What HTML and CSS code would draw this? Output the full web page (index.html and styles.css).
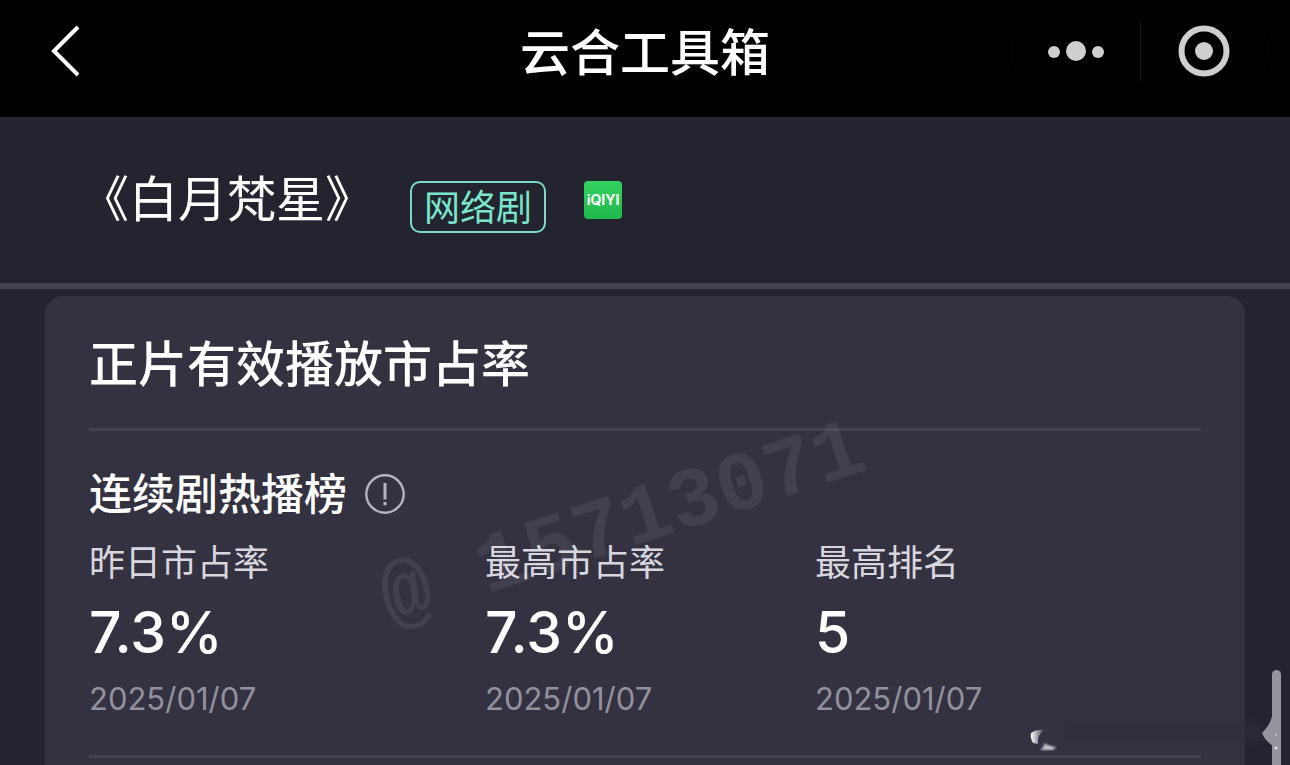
FILE: index.html
```
<!DOCTYPE html>
<html lang="zh-CN">
<head>
  <meta charset="UTF-8">
  <meta name="viewport" content="width=device-width, initial-scale=1.0">
  <title>云合工具箱</title>
  <link rel="stylesheet" href="styles.css">
</head>
<body>
  <header class="navbar">
    <button class="back-btn" aria-label="返回">
      <svg width="32" height="54" viewBox="0 0 32 54"><path d="M28 3 4 27l24 24" fill="none" stroke="#fff" stroke-width="4"/></svg>
    </button>
    <h1>云合工具箱</h1>
    <div class="capsule">
      <button class="more-btn" aria-label="更多">
        <svg width="58" height="22" viewBox="0 0 58 22" fill="#cfcfcf"><circle cx="7" cy="12" r="6"/><circle cx="29" cy="11" r="10"/><circle cx="51" cy="12" r="6"/></svg>
      </button>
      <button class="close-btn" aria-label="关闭">
        <svg width="52" height="52" viewBox="0 0 52 52"><circle cx="26" cy="26" r="22.5" fill="none" stroke="#cfcfcf" stroke-width="6"/><circle cx="26" cy="26" r="9" fill="#cfcfcf"/></svg>
      </button>
    </div>
  </header>

  <section class="drama">
    <h2>《白月梵星》</h2>
    <span class="tag">网络剧</span>
    <span class="platform">iQIYI</span>
  </section>

  <main class="card">
    <h2 class="card-title">正片有效播放市占率</h2>
    <div class="rank-head">
      <h3>连续剧热播榜</h3>
      <button class="info-btn" aria-label="说明">
        <svg width="40" height="40" viewBox="0 0 40 40"><circle cx="20" cy="20" r="18.7" fill="none" stroke="#b5b3c2" stroke-width="2.4"/><path d="M20 9v16.5M20 28v3.2" stroke="#b5b3c2" stroke-width="3"/></svg>
      </button>
    </div>
    <div class="stats">
      <div class="stat">
        <div class="label">昨日市占率</div>
        <div class="value">7.3%</div>
        <div class="date">2025/01/07</div>
      </div>
      <div class="stat">
        <div class="label">最高市占率</div>
        <div class="value">7.3%</div>
        <div class="date">2025/01/07</div>
      </div>
      <div class="stat">
        <div class="label">最高排名</div>
        <div class="value">5</div>
        <div class="date">2025/01/07</div>
      </div>
    </div>
    <div class="watermark" aria-hidden="true">@ 15713071</div>
  </main>

  <div class="scroll-thumb"></div>
  <svg class="smudge" width="260" height="54" viewBox="0 0 260 54" aria-hidden="true">
    <defs>
      <linearGradient id="fade" x1="0" x2="1" y1="0" y2="0">
        <stop offset="0" stop-color="#fff"/>
        <stop offset="1" stop-color="#fff" stop-opacity="0"/>
      </linearGradient>
      <filter id="soft"><feGaussianBlur stdDeviation="3"/></filter>
      <filter id="edge"><feGaussianBlur stdDeviation="1"/></filter>
    </defs>
    <path d="M30 10h200l4 22H34z" fill="#302d3b" opacity=".5" filter="url(#soft)"/>
    <path d="M1 22q6-4 14-3-8 4-7 14l-5-1q-3-5-2-10z" fill="url(#fade)"/>
    <path d="M10 39h13l3-3q-8-1-12-4 1 4-4 7z" fill="#c9c8ce" filter="url(#edge)"/>
    <path d="M243 0q-1 12-11 22 3 8 11 13l7-8V8z" fill="#96959e"/>
    <circle cx="246" cy="24" r="1" fill="#c5c4ca"/>
    <circle cx="246" cy="37" r="1.5" fill="#dddce0"/>
  </svg>
</body>
</html>
```
FILE: styles.css
```
* {
  box-sizing: border-box;
}

body {
  display: flex;
  flex-direction: column;
  margin: 0;
  min-height: 100vh;
  background-color: #242330;
  color: #fff;
  font-family: Inter, "Noto Sans CJK SC", sans-serif;
}

h1, h2, h3 {
  margin: 0;
  font-weight: 500;
}

button {
  display: flex;
  align-items: center;
  justify-content: center;
  padding: 0;
  border: none;
  background: none;
}

.navbar {
  display: grid;
  grid-template-columns: 1fr auto 1fr;
  align-items: center;
  height: 117px;
  padding: 0 22px 16px;
  background-color: #000;
}

.navbar h1 {
  padding-top: 4px;
  font-size: 50px;
  line-height: 60px;
}

.back-btn {
  width: 32px;
  margin-left: 28px;
}

.capsule {
  display: flex;
  align-items: center;
  justify-self: end;
  width: 257px;
  height: 96px;
  border: 1px solid #070707;
  border-radius: 48px;
}

.more-btn {
  width: 129px;
  height: 60px;
  border-right: 1px solid #1c1c1c;
}

.close-btn {
  flex: 1;
}

/* 剧名 */
.drama {
  display: flex;
  align-items: flex-start;
  height: 172px;
  padding: 49px 80px 0;
  border-bottom: 6px solid #43414f;
}

.drama h2 {
  font-size: 49px;
  line-height: 68px;
  font-weight: 400;
}

.tag {
  height: 52px;
  margin: 15px 38px 0 36px;
  padding: 0 12px;
  border: 2px solid #78dcc4;
  border-radius: 10px;
  color: #78e6c8;
  font-size: 36px;
  line-height: 50px;
}

.platform {
  width: 38px;
  height: 38px;
  margin-top: 15px;
  border-radius: 4px;
  background: linear-gradient(#34d260, #20b94c);
  font-size: 14px;
  font-weight: 700;
  line-height: 38px;
  text-align: center;
}

/* 卡片 */
.card {
  position: relative;
  flex: 1;
  margin: 7px 45px 0;
  padding: 0 44px;
  border-radius: 18px 18px 0 0;
  background-color: #343241;
}

.card-title {
  padding: 35px 0 29px;
  border-bottom: 3px solid #43414f;
  font-size: 49px;
  line-height: 68px;
}

.rank-head {
  display: flex;
  align-items: center;
  gap: 18px;
  padding-top: 33px;
}

.rank-head h3 {
  font-size: 43px;
  line-height: 60px;
}

.stats {
  display: grid;
  grid-template-columns: 396fr 330fr 386fr;
  padding-bottom: 36px;
  border-bottom: 3px solid #43414f;
}

.label {
  padding-top: 15px;
  color: #d8d7de;
  font-size: 36px;
  line-height: 48px;
}

.value {
  padding-top: 10px;
  font-size: 57px;
  font-weight: 500;
  line-height: 72px;
}

.date {
  padding-top: 10px;
  color: #92919b;
  font-size: 31px;
  line-height: 40px;
}

.watermark {
  position: absolute;
  top: 182px;
  left: 326px;
  color: rgba(255, 255, 255, 0.07);
  font-family: "Liberation Mono", monospace;
  font-size: 84px;
  font-weight: 700;
  line-height: 96px;
  white-space: nowrap;
  transform: rotate(-18deg);
}

.scroll-thumb {
  position: fixed;
  top: 670px;
  right: 9px;
  bottom: 0;
  width: 9px;
  border-radius: 5px 5px 0 0;
  background-color: #96959e;
}

.smudge {
  position: fixed;
  right: 0;
  bottom: 0;
}
```
